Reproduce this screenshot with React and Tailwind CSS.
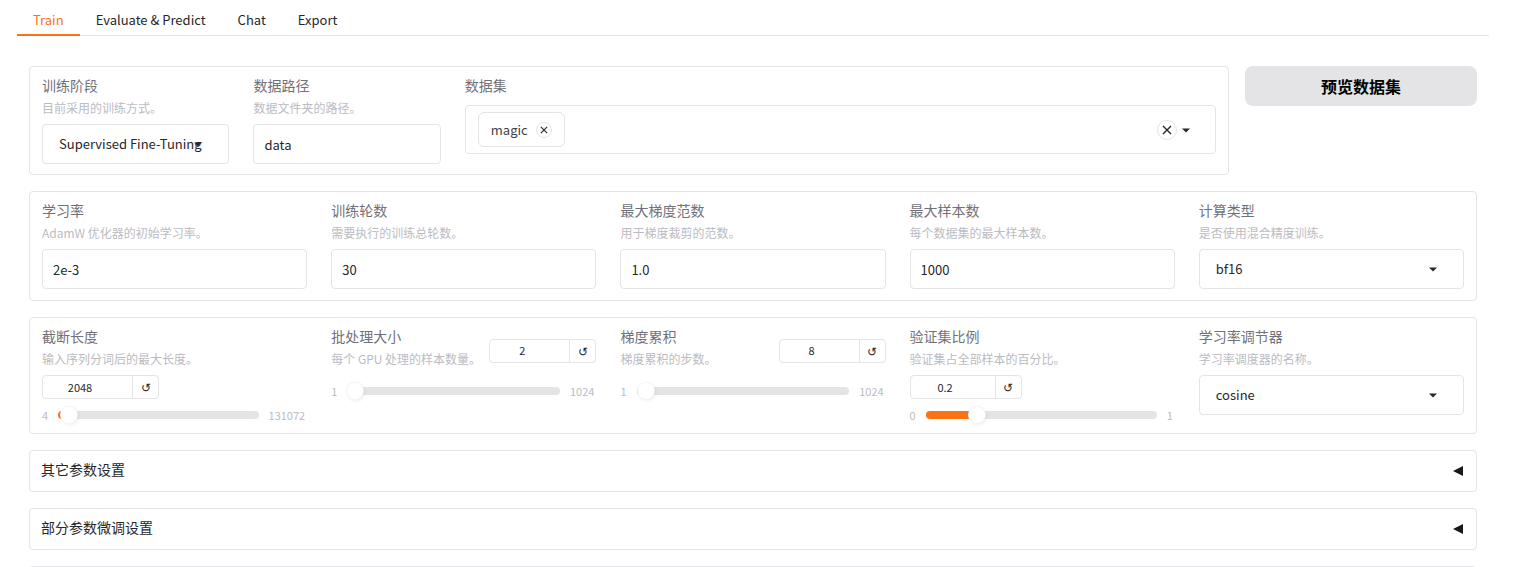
import { useId, useState } from 'react';
import clsx from 'clsx';

const TABS = ['Train', 'Evaluate & Predict', 'Chat', 'Export'];

function Caret({ className }) {
  return (
    <svg viewBox="0 0 18 18" className={clsx('h-[18px] w-[18px] fill-[#27272a]', className)} aria-hidden="true">
      <path d="M5 7.5l4 4 4-4z" />
    </svg>
  );
}

function Cross({ className }) {
  return (
    <svg viewBox="0 0 10 10" className={className} fill="none" stroke="#27272a" strokeWidth="1.4" aria-hidden="true">
      <path d="M1 1l8 8M9 1L1 9" />
    </svg>
  );
}

function FormRow({ className, children }) {
  return <div className={clsx('grid rounded border border-[#e4e4e7] pt-2 pb-[10px]', className)}>{children}</div>;
}

function FieldText({ id, label, info }) {
  return (
    <div className="mb-2">
      <label htmlFor={id} className="block text-sm leading-5 text-[#71717a]">{label}</label>
      {info && <p className="mt-[5px] text-xs leading-4 whitespace-nowrap text-[#bbbbc2]">{info}</p>}
    </div>
  );
}

function TextField({ label, info, defaultValue }) {
  const id = useId();
  return (
    <div className="min-w-0 px-3">
      <FieldText id={id} label={label} info={info} />
      <input
        id={id}
        type="text"
        defaultValue={defaultValue}
        className="block h-10 w-full rounded border border-[#e4e4e7] px-[10px] text-[13px] text-[#27272a] outline-none focus:border-orange-300"
      />
    </div>
  );
}

function SelectField({ label, info, options }) {
  const id = useId();
  return (
    <div className="min-w-0 px-3">
      <FieldText id={id} label={label} info={info} />
      <div className="relative">
        <select
          id={id}
          className="block h-10 w-full appearance-none rounded border border-[#e4e4e7] bg-white pl-4 text-[13px] text-[#27272a] outline-none focus:border-orange-300"
        >
          {options.map((option) => (
            <option key={option}>{option}</option>
          ))}
        </select>
        <Caret className="pointer-events-none absolute top-[11px] right-[22px]" />
      </div>
    </div>
  );
}

function DatasetField({ label }) {
  const [tokens, setTokens] = useState(['magic']);
  return (
    <div className="min-w-0 px-3">
      <div className="mb-[10px] text-sm leading-5 text-[#71717a]">{label}</div>
      <div className="flex min-h-[49px] items-center rounded border border-[#e4e4e7] pr-5 pl-3">
        {tokens.map((token) => (
          <span
            key={token}
            className="flex h-[35px] items-center gap-2 rounded-md border border-[#e4e4e7] px-3 text-[13px] text-[#3f3f46]"
          >
            {token}
            <button
              type="button"
              aria-label="Remove"
              onClick={() => setTokens(tokens.filter((t) => t !== token))}
              className="flex h-4 w-4 items-center justify-center rounded-full border border-[#e4e4e7]"
            >
              <Cross className="h-2 w-2" />
            </button>
          </span>
        ))}
        <button
          type="button"
          aria-label="Clear"
          onClick={() => setTokens([])}
          className="ml-auto flex h-5 w-5 items-center justify-center rounded-full border border-[#e4e4e7]"
        >
          <Cross className="h-[10px] w-[10px]" />
        </button>
        <Caret />
      </div>
    </div>
  );
}

function SliderField({ label, info, min, max, step = 1, initial, numberWidth }) {
  const id = useId();
  const [value, setValue] = useState(initial);
  const percent = ((value - min) / (max - min)) * 100;

  return (
    <div className="min-w-0 px-3">
      <div className="flex flex-wrap items-center justify-between">
        <FieldText id={id} label={label} info={info} />
        <div className="flex h-6 rounded border border-[#e4e4e7]">
          <input
            id={id}
            type="number"
            value={value}
            min={min}
            max={max}
            step={step}
            onChange={(e) => setValue(Number(e.target.value))}
            className={clsx('rounded-l text-center text-[11px] text-[#27272a] outline-none', numberWidth)}
          />
          <button
            type="button"
            aria-label="Reset"
            onClick={() => setValue(initial)}
            className="flex w-[26px] items-center justify-center border-l border-[#e4e4e7] text-xs text-[#27272a]"
          >
            ↺
          </button>
        </div>
      </div>
      <div className="mt-2 flex h-4 items-center gap-[10px] pr-[2px] text-[11px] text-[#bbbbc2]">
        <span>{min}</span>
        <input
          type="range"
          aria-label={label}
          min={min}
          max={max}
          step={step}
          value={value}
          onChange={(e) => setValue(Number(e.target.value))}
          className="h-2 min-w-0 flex-1 appearance-none rounded-full bg-[#e4e4e7] [&::-webkit-slider-thumb]:h-4 [&::-webkit-slider-thumb]:w-4 [&::-webkit-slider-thumb]:appearance-none [&::-webkit-slider-thumb]:rounded-full [&::-webkit-slider-thumb]:bg-white [&::-webkit-slider-thumb]:shadow-[0_0_0_1px_#f4f4f5,1px_1px_4px_rgba(0,0,0,0.1)]"
          style={{ backgroundImage: `linear-gradient(to right, #f97316 ${percent}%, #e4e4e7 ${percent}%)` }}
        />
        <span>{max}</span>
      </div>
    </div>
  );
}

function Accordion({ title }) {
  return (
    <button
      type="button"
      className="flex h-[42px] w-full shrink-0 items-center justify-between rounded border border-[#e4e4e7] pr-[13px] pl-[11px] text-sm text-[#27272a]"
    >
      <span className="pb-1">{title}</span>
      {title && (
        <svg viewBox="0 0 10 10" className="h-[10px] w-[10px] fill-[#18181b]" aria-hidden="true">
          <path d="M0 5L10 0v10z" />
        </svg>
      )}
    </button>
  );
}

export default function App() {
  const [tab, setTab] = useState('Train');

  return (
    <div className="h-screen overflow-hidden bg-white pt-[5px] pr-[37px] pl-[17px] font-['Noto_Sans_CJK_SC',sans-serif]">
      <nav className="flex h-[31px] border-b border-[#e4e4e7]">
        {TABS.map((name) => (
          <button
            key={name}
            type="button"
            onClick={() => setTab(name)}
            className={clsx(
              'h-[31px] border-b-2 px-4 text-[13px]',
              tab === name ? 'border-[#f97316] text-[#f97316]' : 'border-transparent text-[#27272a]'
            )}
          >
            {name}
          </button>
        ))}
      </nav>

      <main className="flex flex-col gap-4 px-3 pt-[30px]">
        <div className="flex items-start gap-4">
          <FormRow className="flex-1 grid-cols-[3fr_3fr_11fr]">
            <SelectField
              label="训练阶段"
              info="目前采用的训练方式。"
              options={['Supervised Fine-Tuning', 'Reward Modeling', 'PPO', 'DPO', 'Pre-Training']}
            />
            <TextField label="数据路径" info="数据文件夹的路径。" defaultValue="data" />
            <DatasetField label="数据集" />
          </FormRow>
          <button type="button" className="h-10 w-[232px] rounded-lg bg-[#e4e4e7] text-base font-semibold text-black">
            预览数据集
          </button>
        </div>

        <FormRow className="min-h-[110px] grid-cols-5">
          <TextField label="学习率" info="AdamW 优化器的初始学习率。" defaultValue="2e-3" />
          <TextField label="训练轮数" info="需要执行的训练总轮数。" defaultValue="30" />
          <TextField label="最大梯度范数" info="用于梯度裁剪的范数。" defaultValue="1.0" />
          <TextField label="最大样本数" info="每个数据集的最大样本数。" defaultValue="1000" />
          <SelectField label="计算类型" info="是否使用混合精度训练。" options={['bf16', 'fp16', 'fp32', 'pure_bf16']} />
        </FormRow>

        <FormRow className="grid-cols-5">
          <SliderField
            label="截断长度"
            info="输入序列分词后的最大长度。"
            min={4}
            max={131072}
            initial={2048}
            numberWidth="w-[89px]"
          />
          <SliderField
            label="批处理大小"
            info="每个 GPU 处理的样本数量。"
            min={1}
            max={1024}
            initial={2}
            numberWidth="w-[79px]"
          />
          <SliderField label="梯度累积" info="梯度累积的步数。" min={1} max={1024} initial={8} numberWidth="w-[79px]" />
          <SliderField
            label="验证集比例"
            info="验证集占全部样本的百分比。"
            min={0}
            max={1}
            step={0.001}
            initial={0.2}
            numberWidth="w-[84px]"
          />
          <SelectField label="学习率调节器" info="学习率调度器的名称。" options={['cosine', 'linear', 'constant']} />
        </FormRow>

        <Accordion title="其它参数设置" />
        <Accordion title="部分参数微调设置" />
        <Accordion />
      </main>
    </div>
  );
}
